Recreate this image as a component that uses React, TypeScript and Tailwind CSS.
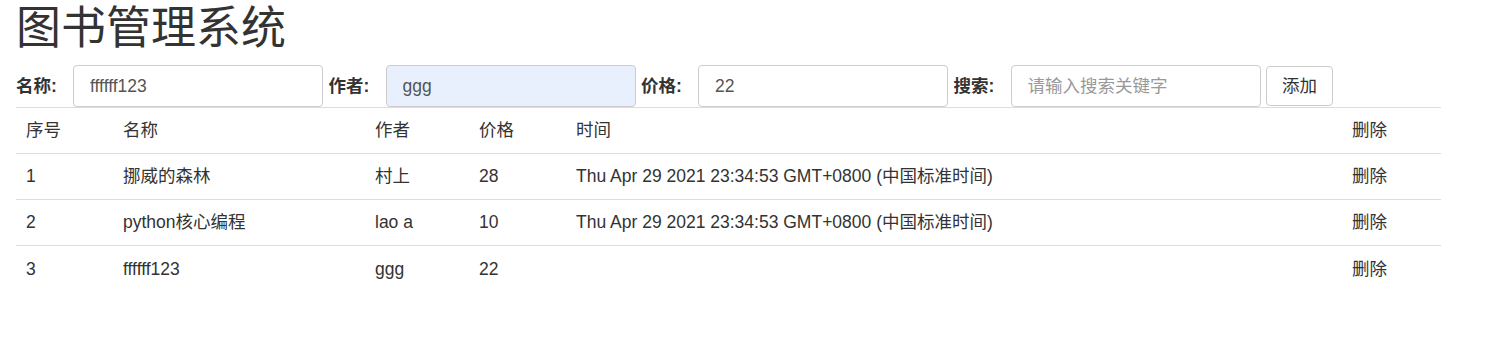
import React, { useState } from 'react';

interface Book {
  id: number;
  name: string;
  author: string;
  price: string;
  time: string;
}

const FONT = "font-['Liberation_Sans','Noto_Sans_CJK_SC',sans-serif]";

const INITIAL_BOOKS: Book[] = [
  { id: 1, name: '挪威的森林', author: '村上', price: '28', time: 'Thu Apr 29 2021 23:34:53 GMT+0800 (中国标准时间)' },
  { id: 2, name: 'python核心编程', author: 'lao a', price: '10', time: 'Thu Apr 29 2021 23:34:53 GMT+0800 (中国标准时间)' },
  { id: 3, name: 'ffffff123', author: 'ggg', price: '22', time: '' },
];

const Field: React.FC<{ label: string; value: string; placeholder?: string; filled?: boolean; onChange: (v: string) => void }> = ({
  label,
  value,
  placeholder,
  filled,
  onChange,
}) => (
  <div className="flex items-center">
    <label className="w-[57px] text-[17.5px] font-bold text-[#333]">{label}</label>
    <input
      type="text"
      value={value}
      placeholder={placeholder}
      onChange={e => onChange(e.target.value)}
      className={`h-[42px] w-[250px] rounded-[4px] border border-[#ccc] px-4 text-[17.5px] text-[#555] placeholder:text-[#999] focus:outline-none ${
        filled ? 'bg-[#e8f0fe]' : 'bg-white'
      }`}
    />
  </div>
);

export default function App() {
  const [books, setBooks] = useState<Book[]>(INITIAL_BOOKS);
  const [name, setName] = useState('ffffff123');
  const [author, setAuthor] = useState('ggg');
  const [price, setPrice] = useState('22');
  const [keyword, setKeyword] = useState('');

  const handleAdd = () => {
    if (!name.trim()) return;
    setBooks(prev => [...prev, { id: prev.length + 1, name, author, price, time: '' }]);
  };

  const shown = keyword ? books.filter(b => b.name.includes(keyword)) : books;

  return (
    <div className={`${FONT} bg-white px-4 text-[#333]`}>
      <h1 className="h-[65px] pt-[1px] text-[45px] font-normal leading-[56px]">图书管理系统</h1>

      {/* Form row */}
      <div className="flex items-center gap-[5.5px]">
        <Field label="名称:" value={name} onChange={setName} />
        <Field label="作者:" value={author} filled onChange={setAuthor} />
        <Field label="价格:" value={price} onChange={setPrice} />
        <Field label="搜索:" value={keyword} placeholder="请输入搜索关键字" onChange={setKeyword} />
        <button
          onClick={handleAdd}
          className="h-[40px] w-[67px] rounded-[4px] border border-[#ccc] bg-white text-[17.5px] text-[#333]"
        >
          添加
        </button>
      </div>

      {/* Book table */}
      <table className="w-[1425px] table-fixed border-collapse text-left text-[17.5px]">
        <colgroup>
          <col className="w-[97px]" />
          <col className="w-[252px]" />
          <col className="w-[104px]" />
          <col className="w-[97px]" />
          <col className="w-[776px]" />
          <col className="w-[99px]" />
        </colgroup>
        <thead>
          <tr className="h-[46px] border-t border-[#ddd]">
            <th className="px-[10px] font-normal">序号</th>
            <th className="px-[10px] font-normal">名称</th>
            <th className="px-[10px] font-normal">作者</th>
            <th className="px-[10px] font-normal">价格</th>
            <th className="px-[10px] font-normal">时间</th>
            <th className="px-[10px] font-normal">删除</th>
          </tr>
        </thead>
        <tbody>
          {shown.map(b => (
            <tr key={b.id} className="h-[46px] border-t border-[#ddd]">
              <td className="px-[10px]">{b.id}</td>
              <td className="px-[10px]">{b.name}</td>
              <td className="px-[10px]">{b.author}</td>
              <td className="px-[10px]">{b.price}</td>
              <td className="px-[10px]">{b.time}</td>
              <td className="px-[10px]">
                <a className="cursor-pointer" onClick={() => setBooks(prev => prev.filter(x => x.id !== b.id))}>
                  删除
                </a>
              </td>
            </tr>
          ))}
        </tbody>
      </table>
    </div>
  );
}
